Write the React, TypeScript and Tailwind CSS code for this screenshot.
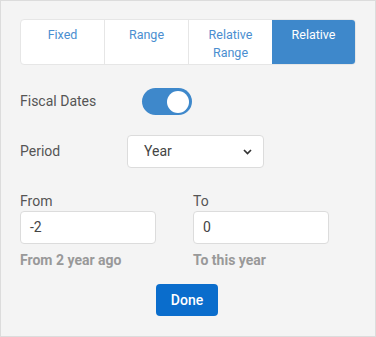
import React from "react";

export default function App() {
  const tabs = ["Fixed", "Range", "Relative Range", "Relative"];
  return (
    <div
      className="w-[376px] h-[337px] bg-[#f4f4f4] border border-[#dcdcdc] box-border"
      style={{ fontFamily: "Roboto, 'Noto Sans', sans-serif" }}
    >
      <div className="pl-[19px] pr-[19px] pt-[18px]">
        <div className="flex w-[336px] h-[46px] border border-[#e6e6e6] rounded-[4px] overflow-hidden bg-white">
          {tabs.map((t, i) => (
            <div
              key={t}
              className={
                "flex-1 flex justify-center text-center text-[12.5px] leading-[18px] pt-[6px] px-3 " +
                (i === 3
                  ? "bg-[#3e88cb] text-white"
                  : "text-[#4a8ed0] ") +
                (i > 0 && i < 3 ? " border-l border-[#e6e6e6]" : "")
              }
            >
              {t}
            </div>
          ))}
        </div>

        <div className="flex items-center mt-[23px] h-[27px]">
          <div className="w-[122px] text-[14px] text-[#555]">Fiscal Dates</div>
          <div className="w-[50px] h-[27px] rounded-full bg-[#3e88cb] flex items-center justify-end pr-[3px]">
            <div className="w-[22px] h-[22px] rounded-full bg-white" />
          </div>
        </div>

        <div className="flex items-center mt-[20px] h-[33px]">
          <div className="w-[107px] text-[14px] text-[#555]">Period</div>
          <div className="w-[137px] h-[33px] bg-white border border-[#dcdcdc] rounded-[4px] flex items-center pl-[16px] pr-[11px] justify-between">
            <span className="text-[14px] text-[#444]">Year</span>
            <svg width="9" height="6" viewBox="0 0 9 6">
              <path d="M1 1 L4.5 4.5 L8 1" fill="none" stroke="#333" strokeWidth="1.7" />
            </svg>
          </div>
        </div>

        <div className="flex mt-[24px] gap-[37px]">
          <div className="w-[136px]">
            <div className="text-[14px] text-[#555] leading-[18px]">From</div>
            <div className="mt-[1px] h-[33px] bg-white border border-[#dcdcdc] rounded-[4px] flex items-center pl-[9px] text-[14px] text-[#444]">-2</div>
            <div className="mt-[6px] text-[14px] font-bold text-[#999]">From 2 year ago</div>
          </div>
          <div className="w-[136px]">
            <div className="text-[14px] text-[#555] leading-[18px]">To</div>
            <div className="mt-[1px] h-[33px] bg-white border border-[#dcdcdc] rounded-[4px] flex items-center pl-[9px] text-[14px] text-[#444]">0</div>
            <div className="mt-[6px] text-[14px] font-bold text-[#999]">To this year</div>
          </div>
        </div>

        <div className="flex justify-center mt-[13px] pr-[2px]">
          <div className="w-[62px] h-[32px] bg-[#0a6dcc] rounded-[4px] text-white text-[14px] font-medium flex items-center justify-center">
            Done
          </div>
        </div>
      </div>
    </div>
  );
}
